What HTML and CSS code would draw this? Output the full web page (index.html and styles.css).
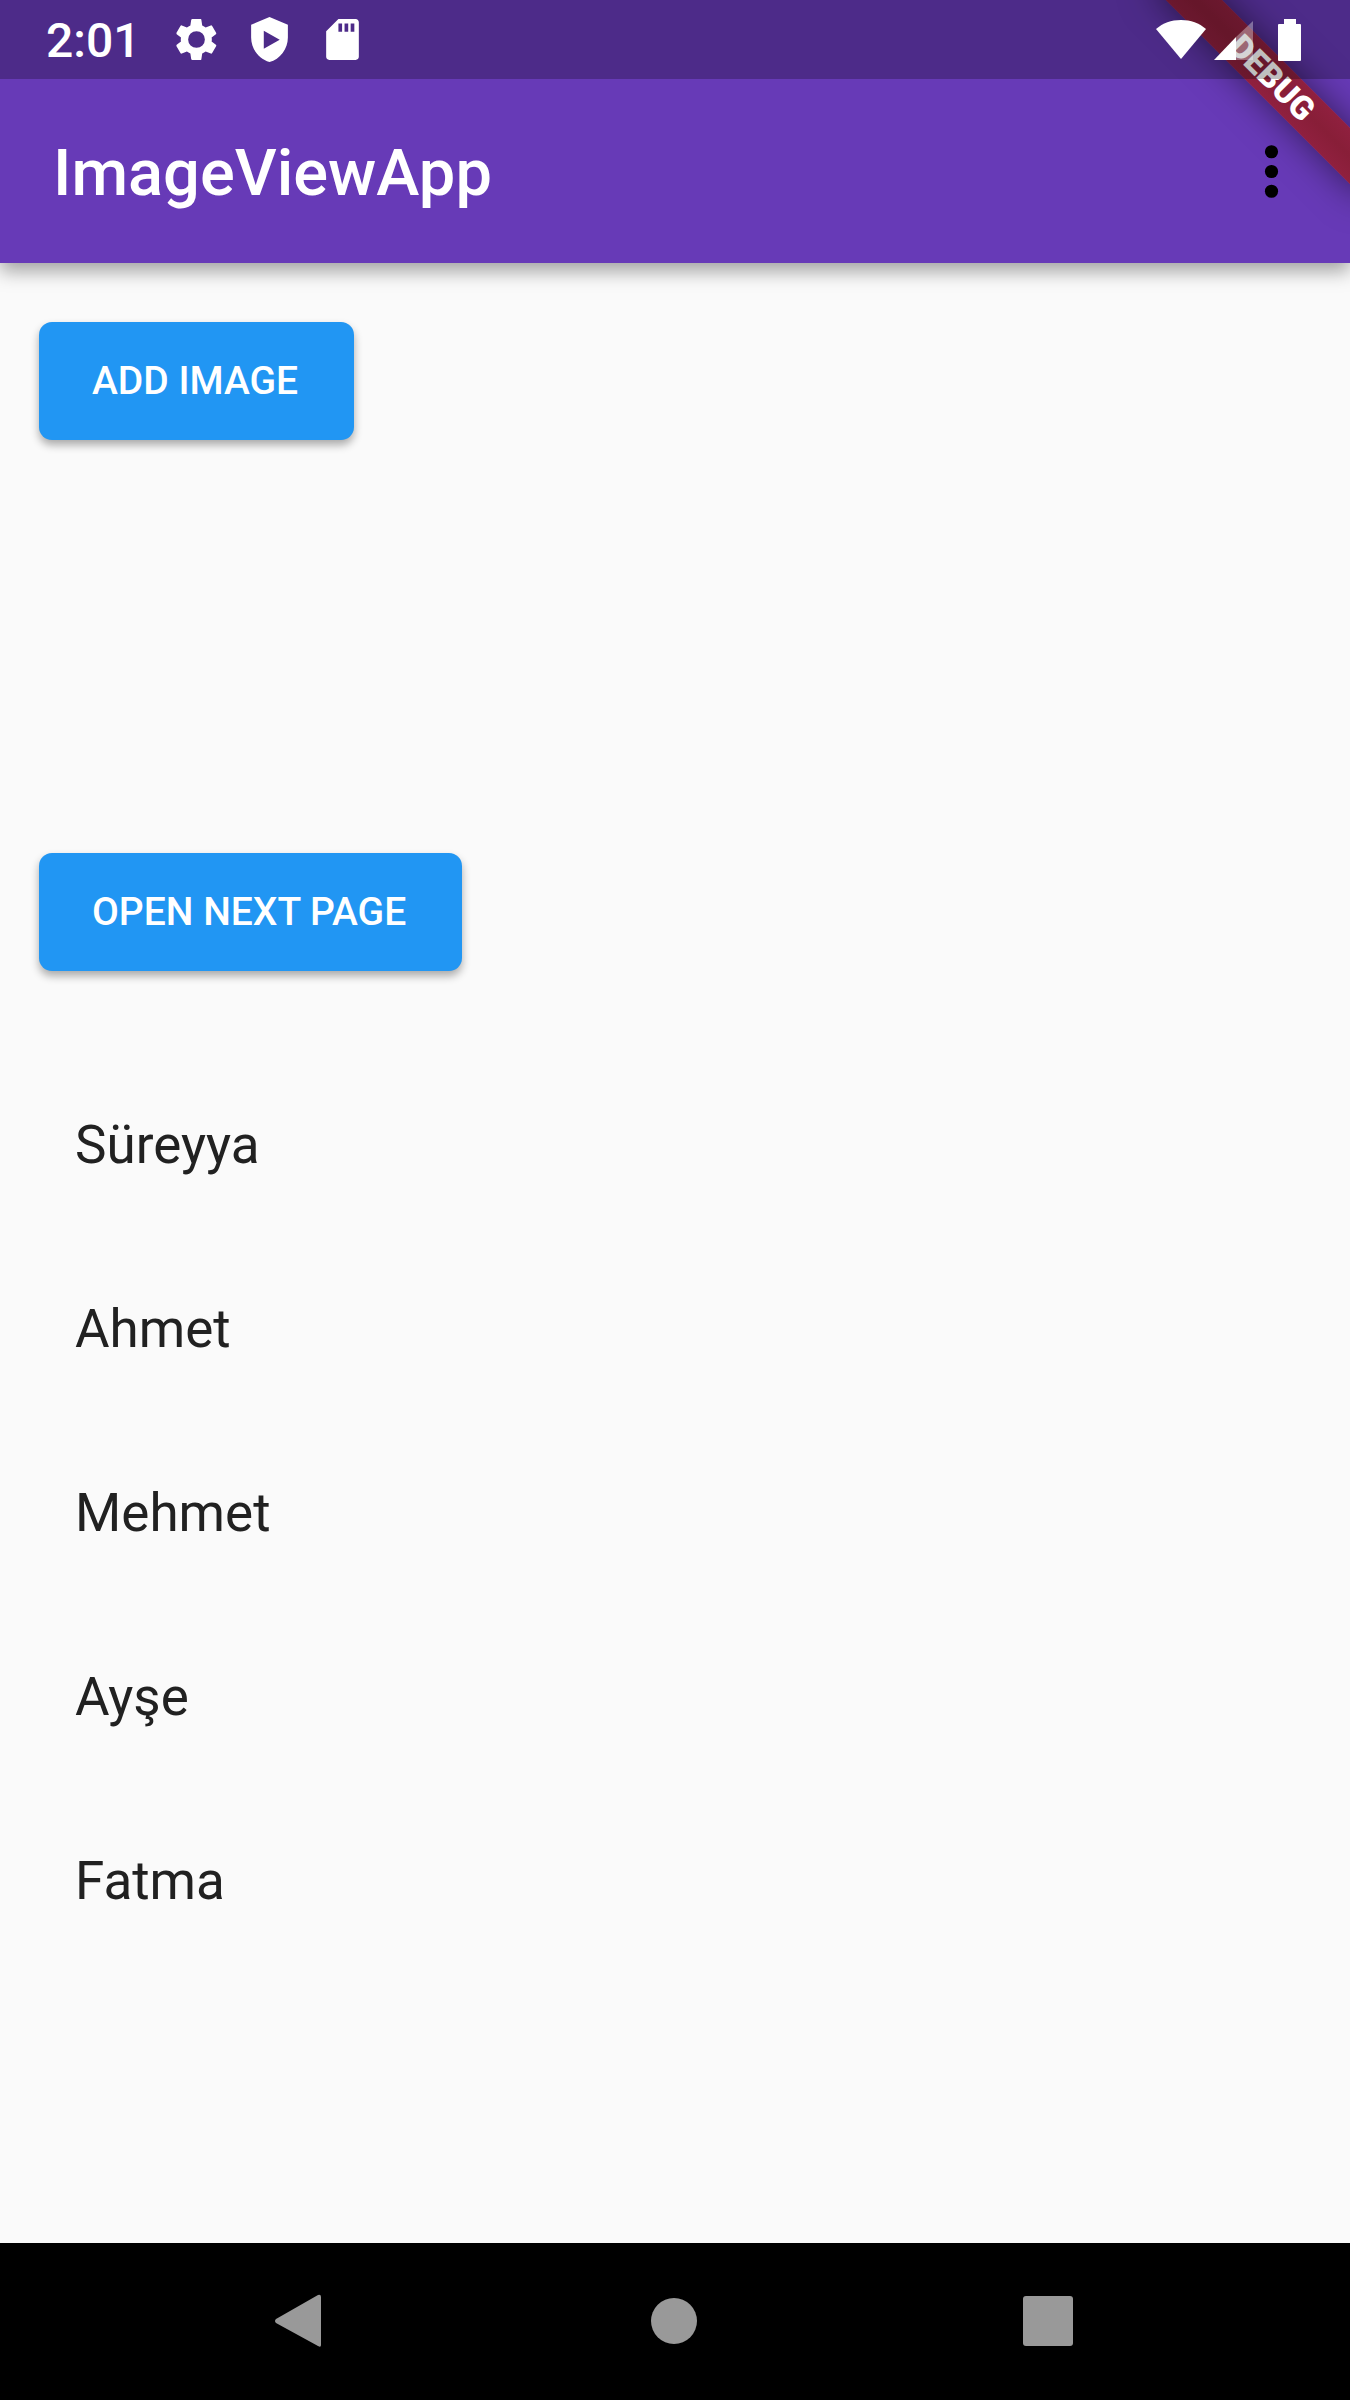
FILE: index.html
```html
<!DOCTYPE html>
<html lang="en">
<head>
<meta charset="utf-8">
<meta name="viewport" content="width=device-width, initial-scale=1">
<title>ImageViewApp</title>
<link rel="stylesheet" href="styles.css">
</head>
<body>
<div class="screen">
  <header class="top">
    <div class="status-bar">
      <div class="status-left">
        <span class="clock">2:01</span>
        <svg class="status-icon" viewBox="0 0 24 24" aria-hidden="true"><path fill-rule="evenodd" d="M19.4 13c.1-.3.1-.6.1-1s0-.7-.1-1l2.100-1.600c.2-.2.300-.4.100-.7l-2-3.400c-.1-.2-.4-.3-.6-.2l-2.500 1c-.5-.4-1.100-.7-1.700-1l-.4-2.600c0-.3-.2-.5-.5-.5h-4c-.2 0-.4.2-.5.5l-.4 2.600c-.6.3-1.200.6-1.700 1l-2.500-1c-.2-.1-.5 0-.6.2l-2 3.400c-.1.3 0 .5.100.7l2.100 1.600c0 .3-.1.6-.1 1s0 .7.100 1l-2.100 1.600c-.2.2-.2.400-.1.7l2 3.400c.100.2.400.3.6.2l2.500-1c.5.4 1.100.7 1.700 1l.4 2.600c.1.3.3.5.5.5h4c.3 0 .5-.2.5-.5l.4-2.600c.6-.3 1.200-.6 1.700-1l2.500 1c.2.100.5 0 .6-.2l2-3.400c.2-.3.100-.5-.1-.7zM12 7.900a4.100 4.100 0 1 1 0 8.200a4.100 4.100 0 1 1 0-8.200z"/></svg>
        <svg class="status-icon" viewBox="0 0 24 24" aria-hidden="true"><path fill-rule="evenodd" d="M12 1 3 4.800V11c0 5.600 3.800 10.700 9 12 5.200-1.300 9-6.400 9-12V4.800zM9.200 7.700l7.800 4.400-7.800 4.400z"/></svg>
        <svg class="status-icon" viewBox="0 0 24 24" aria-hidden="true"><path fill-rule="evenodd" d="M18.500 2H10L4 8v12.500c0 .8.7 1.500 1.500 1.500h13c.8 0 1.500-.7 1.500-1.500v-17c0-.8-.7-1.500-1.500-1.500zM10 4.200h1.800v4H10zm3 0h1.800v4H13zm3 0h1.800v4H16z"/></svg>
      </div>
      <div class="status-right">
        <svg class="wifi" viewBox="0 0 52 42" aria-hidden="true"><path d="M26 40 1 10C8 4 16 1 26 1s18 3 25 9z"/></svg>
        <svg class="signal" viewBox="0 0 40 42" aria-hidden="true"><path d="M0 41 22 18V41z"/><path d="M22 18 39 2V41H22z" opacity=".35"/></svg>
        <svg class="battery" viewBox="0 0 24 42" aria-hidden="true"><path d="M6 0h12v5h4q1 0 1 1v35q0 1-1 1H1q-1 0-1-1V6q0-1 1-1h5z"/></svg>
      </div>
    </div>
    <div class="app-bar">
      <h1 class="title">ImageViewApp</h1>
      <button class="menu" type="button" aria-label="More options">
        <svg class="menu-icon" viewBox="0 0 24 24" aria-hidden="true"><circle cx="12" cy="6" r="2"/><circle cx="12" cy="12" r="2"/><circle cx="12" cy="18" r="2"/></svg>
      </button>
    </div>
    <div class="ribbon-clip"><span class="ribbon">DEBUG</span></div>
  </header>

  <main class="content">
    <button class="raised" type="button">ADD IMAGE</button>
    <div class="image-slot"></div>
    <button class="raised" type="button">OPEN NEXT PAGE</button>
    <ul class="names">
      <li class="name">Süreyya</li>
      <li class="name">Ahmet</li>
      <li class="name">Mehmet</li>
      <li class="name">Ayşe</li>
      <li class="name">Fatma</li>
    </ul>
  </main>

  <nav class="nav-bar" aria-label="System">
    <button class="nav-button" type="button" aria-label="Back"><svg class="nav-icon" viewBox="0 0 54 54" aria-hidden="true"><path d="M48 3V51q0 3-3 1L3 29q-2-2 0-4L45 1q3-1 3 2z"/></svg></button>
    <button class="nav-button" type="button" aria-label="Home"><svg class="nav-icon" viewBox="0 0 54 54" aria-hidden="true"><circle cx="26" cy="27" r="23"/></svg></button>
    <button class="nav-button" type="button" aria-label="Recent apps"><svg class="nav-icon" viewBox="0 0 54 54" aria-hidden="true"><rect x="0" y="2" width="50" height="50" rx="3"/></svg></button>
  </nav>
</div>
</body>
</html>
```
FILE: styles.css
```css
* {
  box-sizing: border-box;
}

body {
  margin: 0;
  background: #fafafa;
  color: #212121;
  font-family: Roboto, "Liberation Sans", sans-serif;
}

button {
  border: 0;
  padding: 0;
  background: none;
  font: inherit;
  cursor: pointer;
}

svg {
  display: block;
}

.screen {
  display: flex;
  flex-direction: column;
  min-height: 100vh;
}

/* Header: status bar tints whatever lies under it, ribbon included */
.top {
  position: relative;
  background: #673ab7;
  box-shadow: 0 8px 18px rgba(0, 0, 0, 0.36);
}

.status-bar {
  position: relative;
  z-index: 2;
  display: flex;
  justify-content: space-between;
  align-items: center;
  height: 79px;
  padding: 0 48px 0 46px;
  background: rgba(0, 0, 0, 0.25);
  color: #fff;
  fill: #fff;
}

.status-left {
  display: flex;
  align-items: center;
  gap: 24px;
}

.clock {
  width: 102px;
  padding-top: 3px;
  font-size: 48px;
  font-weight: 500;
  line-height: 56px;
}

.status-icon {
  width: 49px;
  height: 49px;
}

.status-right {
  display: flex;
  align-items: center;
}

.wifi {
  width: 52px;
  height: 42px;
  margin-right: 7px;
}

.signal {
  width: 40px;
  height: 42px;
  margin-right: 24px;
}

.battery {
  width: 24px;
  height: 42px;
}

.app-bar {
  display: flex;
  align-items: center;
  justify-content: space-between;
  height: 184px;
  padding: 0 39px 0 53px;
}

.title {
  margin: 0;
  padding-top: 4px;
  color: #fff;
  font-size: 65px;
  font-weight: 500;
  line-height: 80px;
}

.menu-icon {
  width: 79px;
  height: 79px;
}

.ribbon-clip {
  position: absolute;
  inset: 0;
  z-index: 1;
  overflow: hidden;
  pointer-events: none;
}

.ribbon {
  position: absolute;
  top: 58px;
  right: -72px;
  width: 300px;
  height: 40px;
  background: linear-gradient(#90203f, #881e38 50%, #90203f);
  box-shadow: 0 0 36px rgba(0, 0, 0, 0.5);
  color: #fff;
  font-size: 33px;
  font-weight: 900;
  line-height: 40px;
  text-align: center;
  transform: rotate(45deg);
}

/* Page body */
.content {
  display: flex;
  flex: 1;
  flex-direction: column;
  align-items: flex-start;
  padding: 59px 39px;
}

.raised {
  height: 118px;
  padding: 0 56px 0 53px;
  border-radius: 13px;
  background: #2196f3;
  box-shadow: 0 5px 8px rgba(0, 0, 0, 0.32);
  color: #fff;
  font-size: 39px;
  font-weight: 500;
}

.image-slot {
  height: 413px;
}

.names {
  align-self: stretch;
  margin: 82px 0 0;
  padding: 0;
  list-style: none;
}

.name {
  padding: 0 36px;
  font-size: 53px;
  line-height: 184px;
}

/* System navigation */
.nav-bar {
  display: flex;
  justify-content: center;
  gap: 215px;
  height: 157px;
  padding-bottom: 2px;
  background: #000;
}

.nav-button {
  display: grid;
  place-items: center;
  width: 160px;
}

.nav-icon {
  width: 54px;
  height: 54px;
  fill: #999;
}
```
